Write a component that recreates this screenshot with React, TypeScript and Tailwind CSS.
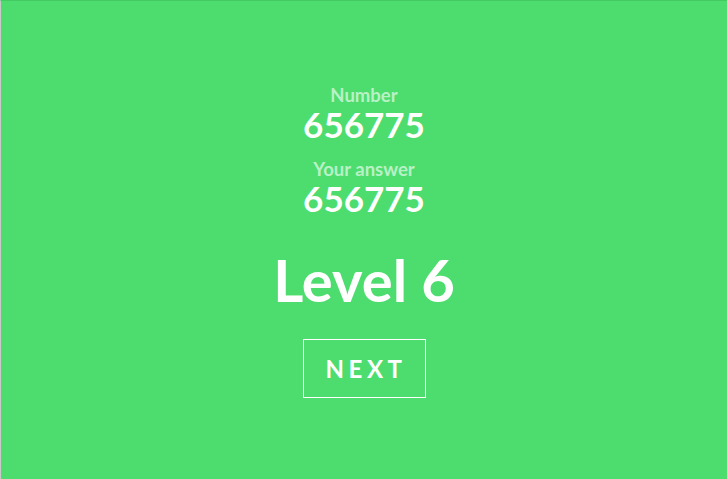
const App = () => {
  const number = "656775";
  const answer = "656775";
  const level = 6;

  return (
    <div
      className="w-[727px] h-[479px] bg-[#4ddd6f] border-l border-l-[#c9c9c9] border-t border-t-[#45c963] flex flex-col items-center text-white"
      style={{ fontFamily: "Lato, 'Open Sans', sans-serif" }}
    >
      <div className="mt-[84px] flex flex-col items-center">
        <div className="text-[18.5px] font-bold leading-[20px] text-[#b9f1c6]">Number</div>
        <div className="text-[35px] font-bold leading-[38px]">{number}</div>
        <div className="mt-[16px] text-[18.5px] font-bold leading-[20px] text-[#b9f1c6]">Your answer</div>
        <div className="text-[35px] font-bold leading-[38px]">{answer}</div>
      </div>
      <h1 className="mt-[30px] text-[58px] font-bold leading-[66px]">Level {level}</h1>
      <button className="mt-[26px] w-[123px] h-[59px] border border-white text-[24px] font-bold tracking-[0.19em] pl-[4px] flex items-center justify-center">
        NEXT
      </button>
    </div>
  );
};

export default App;
